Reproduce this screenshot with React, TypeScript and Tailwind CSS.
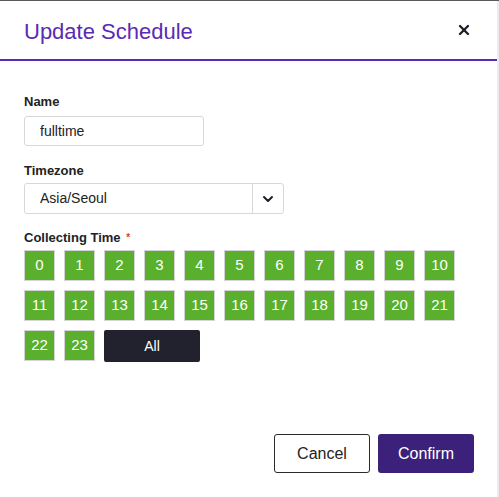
import { ChevronDown, X } from "lucide-react";

const hours = Array.from({ length: 24 }, (_, i) => i);

function HourButton({ h }: { h: number }) {
  return (
    <button className="w-[31px] h-[31px] bg-[#5aaf2c] border border-[#d4d4d4] text-white text-[15px] flex items-center justify-center">
      {h}
    </button>
  );
}

export default function App() {
  return (
    <div
      className="w-[499px] h-[497px] bg-white border-t border-[#5a5a5a] flex"
      style={{ fontFamily: '"Liberation Sans", Arial, sans-serif' }}
    >
      <div className="w-[497px] h-full flex flex-col">
        {/* header */}
        <div className="h-[60px] flex items-center justify-between px-6 border-b-2 border-[#5b2ab3]">
          <h1 className="text-[22px] text-[#5b2ab3] mt-[2px]">Update Schedule</h1>
          <X size={16} strokeWidth={3.5} className="text-[#1e1e2a] mr-[1px]" />
        </div>

        {/* body */}
        <div className="px-6 pt-[33px] flex flex-col">
          <label className="text-[13px] leading-4 font-bold text-[#222] mb-[6px]">Name</label>
          <div className="w-[180px] h-[30px] border border-[#d8d8d8] rounded-[3px] flex items-center px-[15px] text-[14px] text-[#222]">
            fulltime
          </div>

          <label className="text-[13px] leading-4 font-bold text-[#222] mt-[17px] mb-[4px]">Timezone</label>
          <div className="w-[260px] h-[31px] border border-[#d8d8d8] rounded-[3px] flex items-center text-[14px] text-[#222]">
            <span className="flex-1 px-[15px]">Asia/Seoul</span>
            <div className="w-[31px] h-full border-l border-[#d8d8d8] flex items-center justify-center">
              <ChevronDown size={16} strokeWidth={3} className="text-[#1e1e2a]" />
            </div>
          </div>

          <label className="text-[13px] leading-4 font-bold text-[#222] mt-[16px] mb-[4px]">
            Collecting Time <span className="text-[#e53935] text-[10px] align-top ml-[2px]">*</span>
          </label>
          <div className="w-[440px] flex flex-wrap gap-[9px]">
            {hours.map((h) => (
              <HourButton key={h} h={h} />
            ))}
            <button className="w-[96px] h-[32px] bg-[#22222e] rounded-[2px] text-white text-[14px] flex items-center justify-center">
              All
            </button>
          </div>
        </div>

        {/* footer */}
        <div className="flex justify-end gap-2 pr-[23px] mt-[72px]">
          <button className="w-[96px] h-[39px] border border-[#2a2a2a] rounded-[3px] bg-white text-[16px] text-[#222]">
            Cancel
          </button>
          <button className="w-[96px] h-[39px] rounded-[3px] bg-[#3b2179] text-[16px] text-white">
            Confirm
          </button>
        </div>
      </div>
      <div className="w-[2px] h-full bg-[#ececec]" />
    </div>
  );
}
